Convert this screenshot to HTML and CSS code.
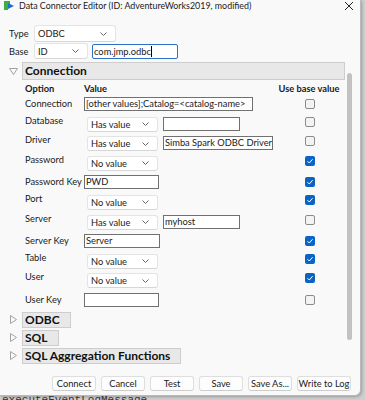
FILE: index.html
```html
<!DOCTYPE html>
<html lang="en">
<head>
    <meta charset="UTF-8">
    <title>Data Connector Editor</title>
    <link rel="stylesheet" href="styles.css">
</head>
<body>
    <div class="window">
        <div class="titlebar">
            <svg class="app-icon" width="12" height="11" viewBox="0 0 12 11">
                <path d="M1 1 L7 1 L7 4 L5 4 L5 10 L1 10 Z" fill="#3fae3a"/>
                <path d="M5 3 L11 6 L5 9 Z" fill="#1f6fd1"/>
            </svg>
            <span class="title">Data Connector Editor (ID: AdventureWorks2019, modified)</span>
            <svg class="close" width="10" height="10" viewBox="0 0 10 10">
                <path d="M1 1 L9 9 M9 1 L1 9" stroke="#222" stroke-width="1"/>
            </svg>
        </div>

        <div class="top-form">
            <div class="form-row">
                <span class="form-label">Type</span>
                <div class="combo combo-type">ODBC<svg class="chev" width="7" height="4" viewBox="0 0 7 4"><path d="M0.5 0.5 L3.5 3.5 L6.5 0.5" fill="none" stroke="#666"/></svg></div>
            </div>
            <div class="form-row">
                <span class="form-label">Base</span>
                <div class="combo combo-base">ID<svg class="chev" width="7" height="4" viewBox="0 0 7 4"><path d="M0.5 0.5 L3.5 3.5 L6.5 0.5" fill="none" stroke="#666"/></svg></div>
                <div class="tbox tbox-focus">com.jmp.odbc<span class="caret"></span></div>
            </div>
        </div>

        <div class="scroller">
            <div class="scroll-content">
                <div class="outline-head">
                    <svg class="tri" width="9" height="7" viewBox="0 0 9 7"><path d="M0.5 0.5 L8.5 0.5 L4.5 6.5 Z" fill="none" stroke="#a3a3a3"/></svg>
                    <div class="outline-box outline-wide">Connection</div>
                </div>

                <div class="option-grid" id="optionGrid">
                    <div class="grid-head">Option</div>
                    <div class="grid-head">Value</div>
                    <div class="grid-head head-center">Use base value</div>
                </div>

                <div class="outline-head">
                    <svg class="tri" width="9" height="9" viewBox="0 0 9 9"><path d="M1.5 0.5 L7.5 4.5 L1.5 8.5 Z" fill="none" stroke="#a3a3a3"/></svg>
                    <div class="outline-box">ODBC</div>
                </div>
                <div class="outline-head">
                    <svg class="tri" width="9" height="9" viewBox="0 0 9 9"><path d="M1.5 0.5 L7.5 4.5 L1.5 8.5 Z" fill="none" stroke="#a3a3a3"/></svg>
                    <div class="outline-box">SQL</div>
                </div>
                <div class="outline-head">
                    <svg class="tri" width="9" height="9" viewBox="0 0 9 9"><path d="M1.5 0.5 L7.5 4.5 L1.5 8.5 Z" fill="none" stroke="#a3a3a3"/></svg>
                    <div class="outline-box">SQL Aggregation Functions</div>
                </div>
            </div>
            <div class="track"><div class="thumb"></div></div>
        </div>

        <div class="buttons">
            <button>Connect</button>
            <button>Cancel</button>
            <button>Test</button>
            <button>Save</button>
            <button>Save As...</button>
            <button class="wide-btn">Write to Log</button>
        </div>
    </div>
    <div class="behind">executeEventLogMessage</div>

    <script>
        const grid = document.getElementById('optionGrid');

        // kind: text = text box only, select = combo (+ optional text box)
        const options = [
            { name: 'Connection', kind: 'text', text: '[other values];Catalog=<catalog-name>', width: 169, base: false },
            { name: 'Database', kind: 'select', choice: 'Has value', text: '', width: 77, base: false },
            { name: 'Driver', kind: 'select', choice: 'Has value', text: 'Simba Spark ODBC Driver', width: 110, base: false },
            { name: 'Password', kind: 'select', choice: 'No value', base: true },
            { name: 'Password Key', kind: 'text', text: 'PWD', width: 75, base: true },
            { name: 'Port', kind: 'select', choice: 'No value', base: true },
            { name: 'Server', kind: 'select', choice: 'Has value', text: 'myhost', width: 77, base: false },
            { name: 'Server Key', kind: 'text', text: 'Server', width: 76, base: true },
            { name: 'Table', kind: 'select', choice: 'No value', base: true },
            { name: 'User', kind: 'select', choice: 'No value', base: true },
            { name: 'User Key', kind: 'text', text: '', width: 75, base: false }
        ];

        const chev = '<svg class="chev" width="7" height="4" viewBox="0 0 7 4"><path d="M0.5 0.5 L3.5 3.5 L6.5 0.5" fill="none" stroke="#666"/></svg>';
        const tick = '<svg width="10" height="10" viewBox="0 0 10 10"><path d="M2.5 5.2 L4.3 7 L7.6 3.2" fill="none" stroke="#fff" stroke-width="1"/></svg>';

        options.forEach(opt => {
            const label = document.createElement('div');
            label.className = 'opt-label ' + opt.kind;
            label.textContent = opt.name;

            const value = document.createElement('div');
            value.className = 'opt-value';
            if (opt.kind === 'select') {
                value.innerHTML = '<div class="combo combo-row">' + opt.choice + chev + '</div>';
                if (opt.choice === 'Has value') {
                    value.innerHTML += '<div class="tbox tbox-row"></div>';
                }
            } else {
                value.innerHTML = '<div class="tbox tbox-row"></div>';
            }
            const box = value.querySelector('.tbox');
            if (box) {
                box.textContent = opt.text;
                box.style.width = opt.width + 'px';
            }

            const check = document.createElement('div');
            check.className = 'opt-check ' + opt.kind;
            check.innerHTML = '<span class="checkbox' + (opt.base ? ' checked">' + tick : '">') + '</span>';

            grid.appendChild(label);
            grid.appendChild(value);
            grid.appendChild(check);
        });
    </script>
</body>
</html>
```

FILE: styles.css
```css
html, body {
    margin: 0;
    padding: 0;
    height: 400px;
    overflow: hidden;
}
body {
    background-color: #cfcfcf;
    font-family: Lato, "Noto Sans", sans-serif;
    color: #1a1a1a;
}
.window {
    width: 360px;
    height: 395px;
    background-color: #f9f9f9;
    border-right: 1px solid #b9b9b9;
    border-bottom: 1px solid #b9b9b9;
    border-bottom-right-radius: 6px;
    box-shadow: 1px 1px 3px rgba(0,0,0,0.25);
    display: flex;
    flex-direction: column;
}
.titlebar {
    height: 25px;
    display: flex;
    align-items: flex-start;
    font-size: 8.9px;
    line-height: 12px;
}
.app-icon {
    margin: 0 4px 0 3px;
}
.title {
    flex: 1;
    white-space: nowrap;
}
.close {
    margin: 1px 6px 0 0;
}
.top-form {
    padding-left: 9px;
    font-size: 9.3px;
}
.form-row {
    display: flex;
    align-items: center;
    margin-bottom: 1px;
}
.form-label {
    width: 25px;
}
.combo {
    box-sizing: border-box;
    background-color: #fff;
    border: 1px solid #e4e4e4;
    border-bottom-color: #d6d6d6;
    border-radius: 3px;
    display: flex;
    align-items: center;
    justify-content: space-between;
    padding: 0 8px 0 3px;
    white-space: nowrap;
}
.combo-type {
    width: 82px;
    height: 17px;
}
.combo-base {
    width: 54px;
    height: 16px;
}
.tbox {
    box-sizing: border-box;
    background-color: #fff;
    border: 1px solid #707070;
    white-space: nowrap;
    overflow: hidden;
    padding-left: 1px;
}
.tbox-focus {
    width: 86px;
    height: 15px;
    margin-left: 4px;
    border: 1px solid #2c6fc4;
    border-radius: 2px;
    line-height: 13px;
    display: flex;
    align-items: center;
}
.caret {
    width: 1px;
    height: 11px;
    background-color: #000;
}
.scroller {
    height: 309px;
    margin-top: 2px;
    display: flex;
    overflow: hidden;
}
.scroll-content {
    flex: 1;
}
.track {
    width: 10px;
    margin-right: 5px;
}
.thumb {
    width: 5px;
    height: 267px;
    margin: 11px 0 0 2px;
    border-radius: 3px;
    background-color: #c2c2c2;
}
.outline-head {
    display: flex;
    align-items: center;
    margin-bottom: 2px;
}
.tri {
    margin: 0 4px 0 9px;
}
.outline-box {
    box-sizing: border-box;
    height: 16px;
    line-height: 14px;
    padding: 0 10px 0 2px;
    background-color: #e8e8e8;
    border: 1px solid #cdcdcd;
    font-weight: bold;
    font-size: 12px;
    color: #111;
}
.outline-wide {
    flex: 1;
    height: 18px;
    line-height: 16px;
}
.option-grid {
    display: grid;
    grid-template-columns: 59px 193px 64px;
    grid-template-rows: 15px;
    grid-auto-rows: 19.6px;
    padding-left: 25px;
    font-size: 9.3px;
    margin-bottom: -0.6px;
}
.grid-head {
    font-weight: bold;
    line-height: 14px;
    white-space: nowrap;
}
.head-center {
    text-align: center;
}
.opt-label {
    line-height: 14px;
    white-space: nowrap;
}
.opt-label.select {
    margin-top: -3px;
}
.opt-value {
    display: flex;
    align-items: flex-start;
}
.combo-row {
    width: 71px;
    height: 15px;
    margin-left: 3px;
    margin-right: 5px;
}
.tbox-row {
    height: 14px;
    line-height: 12px;
}
.opt-check {
    display: flex;
    justify-content: center;
    padding-left: 1px;
}
.opt-check.text {
    padding-top: 2px;
}
.checkbox {
    box-sizing: border-box;
    width: 10px;
    height: 10px;
    border: 1px solid #8c8c8c;
    border-radius: 2px;
    background-color: #f3f3f3;
}
.checkbox.checked {
    border: none;
    background-color: #0b63c6;
}
.checkbox svg {
    display: block;
}
.buttons {
    display: flex;
    justify-content: flex-end;
    gap: 5px;
    padding-right: 9px;
    margin-top: 5px;
}
button {
    box-sizing: border-box;
    width: 44px;
    height: 15px;
    padding: 0;
    font-family: inherit;
    font-size: 9.3px;
    color: #1a1a1a;
    background-color: #fdfdfd;
    border: 1px solid #dedede;
    border-bottom-color: #cdcdcd;
    border-radius: 3px;
    white-space: nowrap;
}
.wide-btn {
    width: 54px;
}
.behind {
    font-family: "Liberation Mono", monospace;
    font-size: 11px;
    line-height: 8px;
    color: #333;
    padding-left: 2px;
}
```
